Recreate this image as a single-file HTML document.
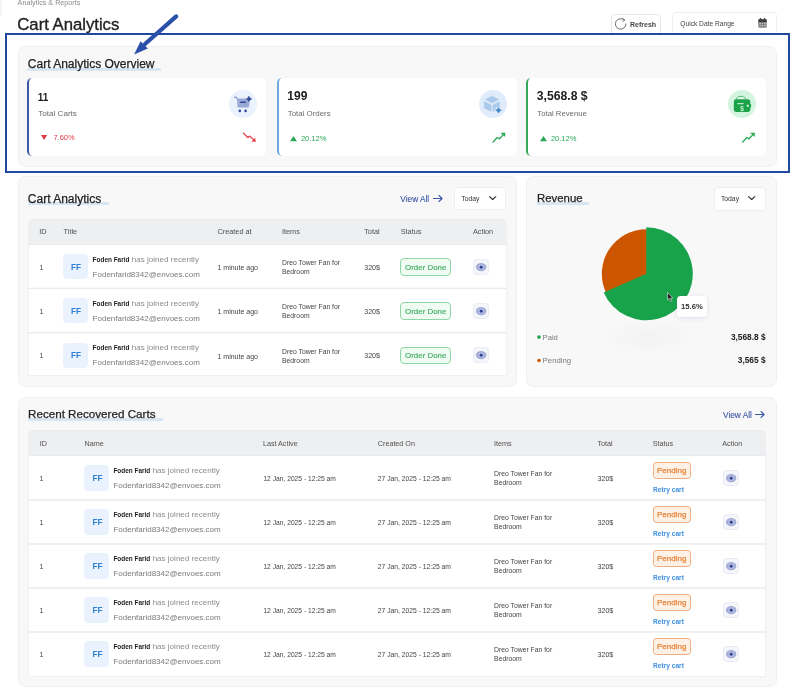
<!DOCTYPE html>
<html><head><meta charset="utf-8"><title>Cart Analytics</title>
<style>
html,body{margin:0;padding:0}
body{width:793px;height:697px;position:relative;overflow:hidden;background:#fff;font-family:"Liberation Sans",sans-serif;}
.t{position:absolute;white-space:nowrap;height:20px;line-height:20px;}
#w{position:absolute;left:0;top:0;width:793px;height:697px;will-change:transform;}
.b{position:absolute;box-sizing:border-box;}
svg{position:absolute;overflow:visible}
</style></head>
<body><div id="w">
<div class="b" style="left:-6px;top:-8px;width:7.7px;height:24.5px;background:#f5f5f5;border-radius:3px;"></div>
<div class="t" style="left:17.6px;top:-7px;font-size:7.2px;color:#8a8a8a;">Analytics &amp; Reports</div>
<div class="t" style="left:17.3px;top:15px;font-size:16.7px;color:#222;-webkit-text-stroke:0.35px #222;">Cart Analytics</div>
<div class="b" style="left:610.9px;top:14.1px;width:49.7px;height:20.9px;background:#fff;border:1px solid #e6e6e6;border-radius:3.5px;"></div>
<svg style="left:615px;top:17.8px" width="12" height="12" viewBox="0 0 12 12"><path d="M9.3 2 A5.3 5.3 0 1 0 11 5.9" fill="none" stroke="#666" stroke-width="0.95" stroke-linecap="round"/><path d="M7.6 0.6 L9.9 2.1 L7.7 3.4" fill="none" stroke="#666" stroke-width="0.85" stroke-linejoin="round" stroke-linecap="round"/></svg>
<div class="t" style="left:630px;top:15px;font-size:7px;color:#444;font-weight:bold;">Refresh</div>
<div class="b" style="left:672.3px;top:12.3px;width:104.3px;height:22.7px;background:#fff;border:1px solid #efefef;border-radius:4px;"></div>
<div class="t" style="left:680.3px;top:14px;font-size:6.65px;color:#444;">Quick Date Range</div>
<svg style="left:757.6px;top:18.2px" width="9" height="10" viewBox="0 0 9 10"><rect x="0.3" y="1.3" width="8.4" height="8.4" rx="1.2" fill="#7d7d7d"/><path d="M0.3 4 V2.5 Q0.3 1.3 1.5 1.3 H7.5 Q8.7 1.3 8.7 2.5 V4Z" fill="#3f3f3f"/><rect x="1.8" y="0" width="1.3" height="2.4" rx="0.5" fill="#3f3f3f"/><rect x="5.9" y="0" width="1.3" height="2.4" rx="0.5" fill="#3f3f3f"/><g fill="#c9c9c9"><rect x="1.5" y="5.1" width="1.4" height="1.1"/><rect x="3.8" y="5.1" width="1.4" height="1.1"/><rect x="6.1" y="5.1" width="1.4" height="1.1"/><rect x="1.5" y="7.1" width="1.4" height="1.1"/><rect x="3.8" y="7.1" width="1.4" height="1.1"/><rect x="6.1" y="7.1" width="1.4" height="1.1"/></g></svg>
<div class="b" style="left:17.6px;top:45.9px;width:759.3px;height:120.7px;background:#f8f8f8;border:1px solid #efeff0;border-radius:7.5px;"></div>
<div class="b" style="left:27px;top:68px;width:133.5px;height:2.8px;background:#d8e6f4;border-radius:2px;"></div>
<div class="t" style="left:27.8px;top:54px;font-size:12px;color:#222;-webkit-text-stroke:0.25px #222;">Cart Analytics Overview</div>
<div class="b" style="left:27.2px;top:77.8px;width:239.2px;height:78.7px;background:#fff;border-left:2px solid #3c57a3;border-radius:5px;"></div>
<div class="b" style="left:276.8px;top:77.8px;width:239.8px;height:78.7px;background:#fff;border-left:2px solid #6fa8dc;border-radius:5px;"></div>
<div class="b" style="left:526.3px;top:77.8px;width:239.7px;height:78.7px;background:#fff;border-left:2px solid #35a85a;border-radius:5px;"></div>
<div class="t" style="left:37.7px;top:88px;font-size:10px;color:#1d1d1d;font-weight:bold;">11</div>
<div class="t" style="left:287.3px;top:86px;font-size:12px;color:#1d1d1d;font-weight:bold;">199</div>
<div class="t" style="left:536.8px;top:86px;font-size:12.2px;color:#1d1d1d;font-weight:bold;">3,568.8 $</div>
<div class="t" style="left:38.2px;top:104px;font-size:8.1px;color:#6b6b6b;">Total Carts</div>
<div class="t" style="left:287.7px;top:104px;font-size:7.9px;color:#6b6b6b;">Total Orders</div>
<div class="t" style="left:537.3px;top:104px;font-size:7.75px;color:#6b6b6b;">Total Revenue</div>
<div class="t" style="left:53.4px;top:128px;font-size:7.5px;color:#e03a45;">7.60%</div>
<div class="t" style="left:300.9px;top:129px;font-size:7.5px;color:#2aa755;">20.12%</div>
<div class="t" style="left:550.9px;top:129px;font-size:7.5px;color:#2aa755;">20.12%</div>
<svg style="left:40.8px;top:135px" width="6.2" height="4.9" viewBox="0 0 6.2 4.9"><path d="M0 0H6.2L3.1 4.9Z" fill="#e03a45"/></svg>
<svg style="left:289.9px;top:135.6px" width="7" height="5.2" viewBox="0 0 7 5.2"><path d="M0 5.2H7L3.5 0Z" fill="#2aa755"/></svg>
<svg style="left:539.6px;top:135.6px" width="7" height="5.2" viewBox="0 0 7 5.2"><path d="M0 5.2H7L3.5 0Z" fill="#2aa755"/></svg>
<div class="b" style="left:228.9px;top:90.1px;width:28.4px;height:28.3px;background:#eaf2fd;border-radius:50%;"></div>
<div class="b" style="left:478.6px;top:90.1px;width:28.5px;height:28.3px;background:#e1ecfb;border-radius:50%;"></div>
<div class="b" style="left:727.9px;top:90.1px;width:28.4px;height:28.3px;background:#d3f4df;border-radius:50%;"></div>
<svg style="left:0;top:0" width="793" height="697" viewBox="0 0 793 697"><path d="M234.4 97.1 L236.5 97.3 L237.3 99.2" fill="none" stroke="#3e54a3" stroke-width="0.75" stroke-linecap="round" stroke-linejoin="round"/><path d="M237 98.5 H248.7 Q249.7 98.5 249.6 99.5 L249.1 106.3 Q249 107.6 247.8 107.6 H238.7 Q237.5 107.6 237.4 106.3Z" fill="#9aa8d6"/><rect x="240.1" y="101.6" width="5.9" height="1.3" rx="0.6" fill="#34489a"/><circle cx="239.8" cy="110.9" r="1.3" fill="#34489a"/><circle cx="245.6" cy="110.9" r="1.3" fill="#34489a"/><path d="M248.9 96.2 Q249.4 98.3 251.7 98.9 Q249.4 99.5 248.9 101.5 Q248.4 99.5 246.4 98.9 Q248.4 98.3 248.9 96.2Z" fill="#2f4596" stroke="#2f4596" stroke-width="0.6" stroke-linejoin="round"/><g fill="#a9c9eb" stroke="#a9c9eb" stroke-width="0.6" stroke-linejoin="round"><path d="M491.8 96.2 L498.7 99.5 L492 103 L485.4 99.5Z"/><path d="M484.3 101.5 L491.2 105.1 V111.3 L484.3 108Z"/><path d="M493 105.1 L499.4 101.8 V108 L493 111.3Z"/></g><circle cx="498.5" cy="110.3" r="3.4" fill="#e1ecfb"/><path d="M498.5 107.6 Q499 109.7 501.4 110.3 Q499 110.9 498.5 113 Q498 110.9 495.7 110.3 Q498 109.7 498.5 107.6Z" fill="#3f87c9" stroke="#3f87c9" stroke-width="0.6" stroke-linejoin="round"/><path d="M735.3 99.6 Q738.5 95.2 742.6 96.3 Q745 97 746.2 99.6" fill="#dff6e7" stroke="#1ba34a" stroke-width="0.7"/><rect x="733.8" y="99.3" width="16.5" height="12.6" rx="2.6" fill="#1ba34a"/><rect x="749.6" y="104" width="1.5" height="3.6" rx="0.7" fill="#1ba34a"/><rect x="737.2" y="102.9" width="6.6" height="1.3" rx="0.6" fill="#bfe8cc"/><rect x="746.7" y="104.8" width="2.3" height="2" rx="0.6" fill="#cdeed8"/><text x="742.1" y="110.8" font-size="6.4" font-weight="bold" fill="#c9efd5" text-anchor="middle" font-family="Liberation Sans, sans-serif">$</text><path d="M243.4 133.1 L247.8 137.5 L249.8 136.1 L253.7 139.9" fill="none" stroke="#e03a45" stroke-width="1.3" stroke-linejoin="round" stroke-linecap="round"/><path d="M255.6 141.5 L251.7 141.6 L255 138.3Z" fill="#e03a45" stroke="#e03a45" stroke-width="0.4" stroke-linejoin="round"/><g transform="translate(0 0)"><path d="M493 142.1 L497.1 137.5 L499.5 138.8 L502.9 135.1" fill="none" stroke="#2aa755" stroke-width="1.35" stroke-linejoin="round" stroke-linecap="round"/><path d="M505.1 132.9 L500.8 133 L505 136.6Z" fill="#2aa755" stroke="#2aa755" stroke-width="0.4" stroke-linejoin="round"/></g><g transform="translate(249.6 0)"><path d="M493 142.1 L497.1 137.5 L499.5 138.8 L502.9 135.1" fill="none" stroke="#2aa755" stroke-width="1.35" stroke-linejoin="round" stroke-linecap="round"/><path d="M505.1 132.9 L500.8 133 L505 136.6Z" fill="#2aa755" stroke="#2aa755" stroke-width="0.4" stroke-linejoin="round"/></g></svg>
<div class="b" style="left:17.6px;top:175.8px;width:499.6px;height:210.9px;background:#f8f8f8;border:1px solid #efeff0;border-radius:7.5px;"></div>
<div class="b" style="left:27.5px;top:202.3px;width:81.1px;height:2.9px;background:#d8e6f4;border-radius:2px;"></div>
<div class="t" style="left:27.8px;top:189px;font-size:12px;color:#222;-webkit-text-stroke:0.25px #222;">Cart Analytics</div>
<div class="t" style="left:400.3px;top:189px;font-size:8.3px;color:#3a55a5;-webkit-text-stroke:0.1px #3a55a5;">View All</div>
<svg style="left:432.8px;top:195.2px" width="10" height="7" viewBox="0 0 10 7"><path d="M0.5 3.5 H9 M6 0.5 L9.1 3.5 L6 6.5" fill="none" stroke="#3a55a5" stroke-width="1.05" stroke-linecap="round" stroke-linejoin="round"/></svg>
<div class="b" style="left:453.9px;top:186.6px;width:52.6px;height:23.9px;background:#fff;border:1px solid #eeeeee;border-radius:4px;"></div>
<div class="t" style="left:461.29999999999995px;top:189px;font-size:6.8px;color:#333;">Today</div>
<svg style="left:488.79999999999995px;top:196.45000000000002px" width="7.4" height="4.2" viewBox="0 0 7.4 4.2"><path d="M0.6 0.6 L3.7 3.5 L6.8 0.6" fill="none" stroke="#333" stroke-width="1.15" stroke-linecap="round" stroke-linejoin="round"/></svg>
<div class="b" style="left:27.7px;top:218.6px;width:478.9px;height:26.2px;background:#eeeff1;border-radius:6px 6px 0 0;border-top:1px solid #e8eaee;border-bottom:1px solid #e8eaee;"></div>
<div class="t" style="left:39.3px;top:222px;font-size:7.3px;color:#4f4f4f;">ID</div>
<div class="t" style="left:63.6px;top:222px;font-size:7.3px;color:#4f4f4f;">Title</div>
<div class="t" style="left:217.5px;top:222px;font-size:7.3px;color:#4f4f4f;">Created at</div>
<div class="t" style="left:282px;top:222px;font-size:7.3px;color:#4f4f4f;">Items</div>
<div class="t" style="left:364.2px;top:222px;font-size:7.3px;color:#4f4f4f;">Total</div>
<div class="t" style="left:400.7px;top:222px;font-size:7.3px;color:#4f4f4f;">Status</div>
<div class="t" style="left:472.9px;top:222px;font-size:7.3px;color:#4f4f4f;">Action</div>
<div class="b" style="left:27.7px;top:244.8px;width:478.9px;height:131.6px;background:#fff;border-radius:0 0 2px 2px;border:1px solid #eff0f4;border-top:none;"></div>
<div class="t" style="left:39.6px;top:258px;font-size:7px;color:#444;">1</div>
<div class="b" style="left:63px;top:254.0px;width:25px;height:25.2px;background:#eaf2fd;border-radius:4px;"></div>
<div class="t" style="left:71.1px;top:258px;font-size:8.2px;color:#2f80d2;font-weight:bold;">FF</div>
<div class="t" style="left:92.60000000000001px;top:250px;font-size:6.45px;color:#222;"><b style="color:#1c1c1c">Foden Farid</b> <span style="font-size:8.05px;color:#8b8b8b;margin-left:0.6px">has joined recently</span></div>
<div class="t" style="left:92.60000000000001px;top:265px;font-size:8.0px;color:#7a7a7a;">Fodenfarid8342@envoes.com</div>
<div class="t" style="left:217.5px;top:258px;font-size:7px;color:#444;">1 minute ago</div>
<div class="t" style="left:282px;top:253px;font-size:6.8px;color:#444;">Dreo Tower Fan for</div>
<div class="t" style="left:282px;top:262px;font-size:6.8px;color:#444;">Bedroom</div>
<div class="t" style="left:364.2px;top:258px;font-size:7.1px;color:#444;">320$</div>
<div class="b" style="left:400.4px;top:258.1px;width:50.6px;height:17.5px;background:#f0fbf3;border:1px solid #8dd7a4;border-radius:4px;"></div>
<div class="t" style="left:405.1px;top:258px;font-size:7.9px;color:#41ae64;-webkit-text-stroke:0.15px #41ae64;">Order Done</div>
<div class="b" style="left:472.5px;top:258.90000000000003px;width:16.6px;height:15.8px;background:#f5f6fa;border:1px solid #eaecf3;border-radius:3.5px;"></div>
<svg style="left:475.6px;top:262.6px" width="10.4" height="8.4" viewBox="0 0 10.4 8.4"><ellipse cx="5.2" cy="4.2" rx="5.2" ry="4.1" fill="#a3acd9"/><ellipse cx="5.2" cy="4.2" rx="3.2" ry="2.9" fill="#b4bbe1"/><circle cx="5.2" cy="4.2" r="1.45" fill="#2f3f93"/></svg>
<svg style="left:0;top:0" width="793" height="697" viewBox="0 0 793 697"><rect x="27.7" y="287.70" width="478.90" height="1.45" fill="#e9ebf1"/></svg>
<div class="t" style="left:39.6px;top:302px;font-size:7px;color:#444;">1</div>
<div class="b" style="left:63px;top:298.25px;width:25px;height:25.2px;background:#eaf2fd;border-radius:4px;"></div>
<div class="t" style="left:71.1px;top:302px;font-size:8.2px;color:#2f80d2;font-weight:bold;">FF</div>
<div class="t" style="left:92.60000000000001px;top:294px;font-size:6.45px;color:#222;"><b style="color:#1c1c1c">Foden Farid</b> <span style="font-size:8.05px;color:#8b8b8b;margin-left:0.6px">has joined recently</span></div>
<div class="t" style="left:92.60000000000001px;top:309px;font-size:8.0px;color:#7a7a7a;">Fodenfarid8342@envoes.com</div>
<div class="t" style="left:217.5px;top:302px;font-size:7px;color:#444;">1 minute ago</div>
<div class="t" style="left:282px;top:297px;font-size:6.8px;color:#444;">Dreo Tower Fan for</div>
<div class="t" style="left:282px;top:306px;font-size:6.8px;color:#444;">Bedroom</div>
<div class="t" style="left:364.2px;top:302px;font-size:7.1px;color:#444;">320$</div>
<div class="b" style="left:400.4px;top:302.35px;width:50.6px;height:17.5px;background:#f0fbf3;border:1px solid #8dd7a4;border-radius:4px;"></div>
<div class="t" style="left:405.1px;top:302px;font-size:7.9px;color:#41ae64;-webkit-text-stroke:0.15px #41ae64;">Order Done</div>
<div class="b" style="left:472.5px;top:303.15000000000003px;width:16.6px;height:15.8px;background:#f5f6fa;border:1px solid #eaecf3;border-radius:3.5px;"></div>
<svg style="left:475.6px;top:306.85px" width="10.4" height="8.4" viewBox="0 0 10.4 8.4"><ellipse cx="5.2" cy="4.2" rx="5.2" ry="4.1" fill="#a3acd9"/><ellipse cx="5.2" cy="4.2" rx="3.2" ry="2.9" fill="#b4bbe1"/><circle cx="5.2" cy="4.2" r="1.45" fill="#2f3f93"/></svg>
<svg style="left:0;top:0" width="793" height="697" viewBox="0 0 793 697"><rect x="27.7" y="331.95" width="478.90" height="1.45" fill="#e9ebf1"/></svg>
<div class="t" style="left:39.6px;top:346px;font-size:7px;color:#444;">1</div>
<div class="b" style="left:63px;top:342.5px;width:25px;height:25.2px;background:#eaf2fd;border-radius:4px;"></div>
<div class="t" style="left:71.1px;top:346px;font-size:8.2px;color:#2f80d2;font-weight:bold;">FF</div>
<div class="t" style="left:92.60000000000001px;top:338px;font-size:6.45px;color:#222;"><b style="color:#1c1c1c">Foden Farid</b> <span style="font-size:8.05px;color:#8b8b8b;margin-left:0.6px">has joined recently</span></div>
<div class="t" style="left:92.60000000000001px;top:353px;font-size:8.0px;color:#7a7a7a;">Fodenfarid8342@envoes.com</div>
<div class="t" style="left:217.5px;top:347px;font-size:7px;color:#444;">1 minute ago</div>
<div class="t" style="left:282px;top:342px;font-size:6.8px;color:#444;">Dreo Tower Fan for</div>
<div class="t" style="left:282px;top:351px;font-size:6.8px;color:#444;">Bedroom</div>
<div class="t" style="left:364.2px;top:346px;font-size:7.1px;color:#444;">320$</div>
<div class="b" style="left:400.4px;top:346.6px;width:50.6px;height:17.5px;background:#f0fbf3;border:1px solid #8dd7a4;border-radius:4px;"></div>
<div class="t" style="left:405.1px;top:346px;font-size:7.9px;color:#41ae64;-webkit-text-stroke:0.15px #41ae64;">Order Done</div>
<div class="b" style="left:472.5px;top:347.40000000000003px;width:16.6px;height:15.8px;background:#f5f6fa;border:1px solid #eaecf3;border-radius:3.5px;"></div>
<svg style="left:475.6px;top:351.1px" width="10.4" height="8.4" viewBox="0 0 10.4 8.4"><ellipse cx="5.2" cy="4.2" rx="5.2" ry="4.1" fill="#a3acd9"/><ellipse cx="5.2" cy="4.2" rx="3.2" ry="2.9" fill="#b4bbe1"/><circle cx="5.2" cy="4.2" r="1.45" fill="#2f3f93"/></svg>
<div class="b" style="left:526.2px;top:175.8px;width:251.0px;height:210.9px;background:#f8f8f8;border:1px solid #efeff0;border-radius:7.5px;"></div>
<div class="b" style="left:536.6px;top:202px;width:52.7px;height:3.2px;background:#d8e6f4;border-radius:2px;"></div>
<div class="t" style="left:537px;top:188px;font-size:11.4px;color:#222;-webkit-text-stroke:0.25px #222;">Revenue</div>
<div class="b" style="left:713.5px;top:186.5px;width:52.7px;height:24.1px;background:#fff;border:1px solid #eeeeee;border-radius:4px;"></div>
<div class="t" style="left:720.9px;top:189px;font-size:6.8px;color:#333;">Today</div>
<svg style="left:748.4px;top:196.45000000000002px" width="7.4" height="4.2" viewBox="0 0 7.4 4.2"><path d="M0.6 0.6 L3.7 3.5 L6.8 0.6" fill="none" stroke="#333" stroke-width="1.15" stroke-linecap="round" stroke-linejoin="round"/></svg>
<div class="b" style="left:596px;top:318px;width:104px;height:38px;background:radial-gradient(ellipse at center, rgba(0,0,0,0.022) 0%, rgba(0,0,0,0) 70%);"></div>
<svg style="left:0;top:0" width="793" height="697" viewBox="0 0 793 697"><path d="M646.8 274.3 L605.85 292.29 A44.5 44.5 0 0 1 646.8 229.3Z" fill="#cc5500"/><path d="M646.3 273.8 L646.3 227.3 A46.5 46.5 0 1 1 603.72 292.49Z" fill="#18a34b"/></svg>
<div class="b" style="left:676.9px;top:296.3px;width:30.3px;height:20.9px;background:#fff;border-radius:3.5px;box-shadow:0 1px 4px rgba(60,90,160,0.16);"></div>
<div class="t" style="left:681px;top:297px;font-size:7.7px;color:#333;font-weight:bold;">15.6%</div>
<svg style="left:667.2px;top:292px" width="7" height="10" viewBox="0 0 7 10"><path d="M0.5 0.5 V8 L2.3 6.4 L3.6 9.4 L4.8 8.9 L3.5 6 L5.9 5.9Z" fill="#222" stroke="#fff" stroke-width="0.5"/></svg>
<svg style="left:0;top:0" width="793" height="697" viewBox="0 0 793 697"><circle cx="539" cy="337.1" r="1.8" fill="#18a34b"/><circle cx="539" cy="360.5" r="1.8" fill="#cc5500"/></svg>
<div class="t" style="left:542.6px;top:328px;font-size:7.6px;color:#7a7a7a;">Paid</div>
<div class="t" style="right:27.5px;top:327px;font-size:8.3px;color:#222;font-weight:bold;">3,568.8 $</div>
<div class="t" style="left:542.6px;top:351px;font-size:7.8px;color:#7a7a7a;">Pending</div>
<div class="t" style="right:27.5px;top:350px;font-size:8.3px;color:#222;font-weight:bold;">3,565 $</div>
<div class="b" style="left:17.6px;top:396.9px;width:759.5px;height:289.9px;background:#f8f8f8;border:1px solid #efeff0;border-radius:7.5px;"></div>
<div class="b" style="left:27.6px;top:417.7px;width:135.2px;height:3.1px;background:#d8e6f4;border-radius:2px;"></div>
<div class="t" style="left:28px;top:404px;font-size:11.65px;color:#222;-webkit-text-stroke:0.25px #222;">Recent Recovered Carts</div>
<div class="t" style="left:723px;top:405px;font-size:8.3px;color:#3a55a5;-webkit-text-stroke:0.1px #3a55a5;">View All</div>
<svg style="left:755.4px;top:411.4px" width="10" height="7" viewBox="0 0 10 7"><path d="M0.5 3.5 H9 M6 0.5 L9.1 3.5 L6 6.5" fill="none" stroke="#3a55a5" stroke-width="1.05" stroke-linecap="round" stroke-linejoin="round"/></svg>
<div class="b" style="left:27.8px;top:429.8px;width:738.7px;height:26.3px;background:#eeeff1;border-radius:6px 6px 0 0;border-top:1px solid #e8eaee;border-bottom:1px solid #e8eaee;"></div>
<div class="t" style="left:39.8px;top:434px;font-size:7.2px;color:#4f4f4f;">ID</div>
<div class="t" style="left:84.6px;top:434px;font-size:7.2px;color:#4f4f4f;">Name</div>
<div class="t" style="left:262.9px;top:434px;font-size:7.2px;color:#4f4f4f;">Last Active</div>
<div class="t" style="left:377.8px;top:434px;font-size:7.2px;color:#4f4f4f;">Created On</div>
<div class="t" style="left:494.1px;top:434px;font-size:7.2px;color:#4f4f4f;">Items</div>
<div class="t" style="left:597.5px;top:434px;font-size:7.2px;color:#4f4f4f;">Total</div>
<div class="t" style="left:652.8px;top:434px;font-size:7.2px;color:#4f4f4f;">Status</div>
<div class="t" style="left:722.3px;top:434px;font-size:7.2px;color:#4f4f4f;">Action</div>
<div class="b" style="left:27.8px;top:456.1px;width:738.7px;height:220.5px;background:#fff;border-radius:0 0 2px 2px;border:1px solid #eff0f4;border-top:none;"></div>
<div class="t" style="left:39.6px;top:469px;font-size:7px;color:#444;">1</div>
<div class="b" style="left:84.3px;top:465.40000000000003px;width:25.0px;height:25.2px;background:#eaf2fd;border-radius:4px;"></div>
<div class="t" style="left:92.39999999999999px;top:469px;font-size:8.2px;color:#2f80d2;font-weight:bold;">FF</div>
<div class="t" style="left:113.4px;top:461px;font-size:6.45px;color:#222;"><b style="color:#1c1c1c">Foden Farid</b> <span style="font-size:8.05px;color:#8b8b8b;margin-left:0.6px">has joined recently</span></div>
<div class="t" style="left:113.4px;top:476px;font-size:8.0px;color:#7a7a7a;">Fodenfarid8342@envoes.com</div>
<div class="t" style="left:263.4px;top:469px;font-size:6.7px;color:#444;">12 Jan, 2025 - 12:25 am</div>
<div class="t" style="left:377.8px;top:469px;font-size:6.75px;color:#444;">27 Jan, 2025 - 12:25 am</div>
<div class="t" style="left:494.1px;top:464px;font-size:6.8px;color:#444;">Dreo Tower Fan for</div>
<div class="t" style="left:494.1px;top:473px;font-size:6.8px;color:#444;">Bedroom</div>
<div class="t" style="left:597.5px;top:469px;font-size:7.1px;color:#444;">320$</div>
<div class="b" style="left:652.9px;top:462.1px;width:38.3px;height:16.8px;background:#fef1e5;border:1px solid #f1ad7c;border-radius:3.5px;"></div>
<div class="t" style="left:657px;top:461px;font-size:8px;color:#e5873f;-webkit-text-stroke:0.25px #e5873f;">Pending</div>
<div class="t" style="left:653.1px;top:480px;font-size:6.6px;color:#3f8fdc;font-weight:bold;">Retry cart</div>
<div class="b" style="left:722.6px;top:470.0px;width:16.5px;height:15.9px;background:#f5f6fa;border:1px solid #eaecf3;border-radius:3.5px;"></div>
<svg style="left:725.65px;top:473.75000000000006px" width="10.4" height="8.4" viewBox="0 0 10.4 8.4"><ellipse cx="5.2" cy="4.2" rx="5.2" ry="4.1" fill="#a3acd9"/><ellipse cx="5.2" cy="4.2" rx="3.2" ry="2.9" fill="#b4bbe1"/><circle cx="5.2" cy="4.2" r="1.45" fill="#2f3f93"/></svg>
<svg style="left:0;top:0" width="793" height="697" viewBox="0 0 793 697"><rect x="27.8" y="499.25" width="738.70" height="1.50" fill="#e9ebf1"/></svg>
<div class="t" style="left:39.6px;top:513px;font-size:7px;color:#444;">1</div>
<div class="b" style="left:84.3px;top:509.40000000000003px;width:25.0px;height:25.2px;background:#eaf2fd;border-radius:4px;"></div>
<div class="t" style="left:92.39999999999999px;top:513px;font-size:8.2px;color:#2f80d2;font-weight:bold;">FF</div>
<div class="t" style="left:113.4px;top:505px;font-size:6.45px;color:#222;"><b style="color:#1c1c1c">Foden Farid</b> <span style="font-size:8.05px;color:#8b8b8b;margin-left:0.6px">has joined recently</span></div>
<div class="t" style="left:113.4px;top:520px;font-size:8.0px;color:#7a7a7a;">Fodenfarid8342@envoes.com</div>
<div class="t" style="left:263.4px;top:513px;font-size:6.7px;color:#444;">12 Jan, 2025 - 12:25 am</div>
<div class="t" style="left:377.8px;top:513px;font-size:6.75px;color:#444;">27 Jan, 2025 - 12:25 am</div>
<div class="t" style="left:494.1px;top:508px;font-size:6.8px;color:#444;">Dreo Tower Fan for</div>
<div class="t" style="left:494.1px;top:517px;font-size:6.8px;color:#444;">Bedroom</div>
<div class="t" style="left:597.5px;top:513px;font-size:7.1px;color:#444;">320$</div>
<div class="b" style="left:652.9px;top:506.1px;width:38.3px;height:16.8px;background:#fef1e5;border:1px solid #f1ad7c;border-radius:3.5px;"></div>
<div class="t" style="left:657px;top:505px;font-size:8px;color:#e5873f;-webkit-text-stroke:0.25px #e5873f;">Pending</div>
<div class="t" style="left:653.1px;top:524px;font-size:6.6px;color:#3f8fdc;font-weight:bold;">Retry cart</div>
<div class="b" style="left:722.6px;top:514.0px;width:16.5px;height:15.9px;background:#f5f6fa;border:1px solid #eaecf3;border-radius:3.5px;"></div>
<svg style="left:725.65px;top:517.75px" width="10.4" height="8.4" viewBox="0 0 10.4 8.4"><ellipse cx="5.2" cy="4.2" rx="5.2" ry="4.1" fill="#a3acd9"/><ellipse cx="5.2" cy="4.2" rx="3.2" ry="2.9" fill="#b4bbe1"/><circle cx="5.2" cy="4.2" r="1.45" fill="#2f3f93"/></svg>
<svg style="left:0;top:0" width="793" height="697" viewBox="0 0 793 697"><rect x="27.8" y="543.25" width="738.70" height="1.50" fill="#e9ebf1"/></svg>
<div class="t" style="left:39.6px;top:557px;font-size:7px;color:#444;">1</div>
<div class="b" style="left:84.3px;top:553.4px;width:25.0px;height:25.2px;background:#eaf2fd;border-radius:4px;"></div>
<div class="t" style="left:92.39999999999999px;top:557px;font-size:8.2px;color:#2f80d2;font-weight:bold;">FF</div>
<div class="t" style="left:113.4px;top:549px;font-size:6.45px;color:#222;"><b style="color:#1c1c1c">Foden Farid</b> <span style="font-size:8.05px;color:#8b8b8b;margin-left:0.6px">has joined recently</span></div>
<div class="t" style="left:113.4px;top:564px;font-size:8.0px;color:#7a7a7a;">Fodenfarid8342@envoes.com</div>
<div class="t" style="left:263.4px;top:557px;font-size:6.7px;color:#444;">12 Jan, 2025 - 12:25 am</div>
<div class="t" style="left:377.8px;top:557px;font-size:6.75px;color:#444;">27 Jan, 2025 - 12:25 am</div>
<div class="t" style="left:494.1px;top:552px;font-size:6.8px;color:#444;">Dreo Tower Fan for</div>
<div class="t" style="left:494.1px;top:561px;font-size:6.8px;color:#444;">Bedroom</div>
<div class="t" style="left:597.5px;top:557px;font-size:7.1px;color:#444;">320$</div>
<div class="b" style="left:652.9px;top:550.1px;width:38.3px;height:16.8px;background:#fef1e5;border:1px solid #f1ad7c;border-radius:3.5px;"></div>
<div class="t" style="left:657px;top:549px;font-size:8px;color:#e5873f;-webkit-text-stroke:0.25px #e5873f;">Pending</div>
<div class="t" style="left:653.1px;top:568px;font-size:6.6px;color:#3f8fdc;font-weight:bold;">Retry cart</div>
<div class="b" style="left:722.6px;top:558.0px;width:16.5px;height:15.9px;background:#f5f6fa;border:1px solid #eaecf3;border-radius:3.5px;"></div>
<svg style="left:725.65px;top:561.75px" width="10.4" height="8.4" viewBox="0 0 10.4 8.4"><ellipse cx="5.2" cy="4.2" rx="5.2" ry="4.1" fill="#a3acd9"/><ellipse cx="5.2" cy="4.2" rx="3.2" ry="2.9" fill="#b4bbe1"/><circle cx="5.2" cy="4.2" r="1.45" fill="#2f3f93"/></svg>
<svg style="left:0;top:0" width="793" height="697" viewBox="0 0 793 697"><rect x="27.8" y="587.25" width="738.70" height="1.50" fill="#e9ebf1"/></svg>
<div class="t" style="left:39.6px;top:601px;font-size:7px;color:#444;">1</div>
<div class="b" style="left:84.3px;top:597.4px;width:25.0px;height:25.2px;background:#eaf2fd;border-radius:4px;"></div>
<div class="t" style="left:92.39999999999999px;top:601px;font-size:8.2px;color:#2f80d2;font-weight:bold;">FF</div>
<div class="t" style="left:113.4px;top:593px;font-size:6.45px;color:#222;"><b style="color:#1c1c1c">Foden Farid</b> <span style="font-size:8.05px;color:#8b8b8b;margin-left:0.6px">has joined recently</span></div>
<div class="t" style="left:113.4px;top:608px;font-size:8.0px;color:#7a7a7a;">Fodenfarid8342@envoes.com</div>
<div class="t" style="left:263.4px;top:601px;font-size:6.7px;color:#444;">12 Jan, 2025 - 12:25 am</div>
<div class="t" style="left:377.8px;top:601px;font-size:6.75px;color:#444;">27 Jan, 2025 - 12:25 am</div>
<div class="t" style="left:494.1px;top:596px;font-size:6.8px;color:#444;">Dreo Tower Fan for</div>
<div class="t" style="left:494.1px;top:605px;font-size:6.8px;color:#444;">Bedroom</div>
<div class="t" style="left:597.5px;top:601px;font-size:7.1px;color:#444;">320$</div>
<div class="b" style="left:652.9px;top:594.1px;width:38.3px;height:16.8px;background:#fef1e5;border:1px solid #f1ad7c;border-radius:3.5px;"></div>
<div class="t" style="left:657px;top:593px;font-size:8px;color:#e5873f;-webkit-text-stroke:0.25px #e5873f;">Pending</div>
<div class="t" style="left:653.1px;top:612px;font-size:6.6px;color:#3f8fdc;font-weight:bold;">Retry cart</div>
<div class="b" style="left:722.6px;top:602.0px;width:16.5px;height:15.9px;background:#f5f6fa;border:1px solid #eaecf3;border-radius:3.5px;"></div>
<svg style="left:725.65px;top:605.75px" width="10.4" height="8.4" viewBox="0 0 10.4 8.4"><ellipse cx="5.2" cy="4.2" rx="5.2" ry="4.1" fill="#a3acd9"/><ellipse cx="5.2" cy="4.2" rx="3.2" ry="2.9" fill="#b4bbe1"/><circle cx="5.2" cy="4.2" r="1.45" fill="#2f3f93"/></svg>
<svg style="left:0;top:0" width="793" height="697" viewBox="0 0 793 697"><rect x="27.8" y="631.25" width="738.70" height="1.50" fill="#e9ebf1"/></svg>
<div class="t" style="left:39.6px;top:645px;font-size:7px;color:#444;">1</div>
<div class="b" style="left:84.3px;top:641.4px;width:25.0px;height:25.2px;background:#eaf2fd;border-radius:4px;"></div>
<div class="t" style="left:92.39999999999999px;top:645px;font-size:8.2px;color:#2f80d2;font-weight:bold;">FF</div>
<div class="t" style="left:113.4px;top:637px;font-size:6.45px;color:#222;"><b style="color:#1c1c1c">Foden Farid</b> <span style="font-size:8.05px;color:#8b8b8b;margin-left:0.6px">has joined recently</span></div>
<div class="t" style="left:113.4px;top:652px;font-size:8.0px;color:#7a7a7a;">Fodenfarid8342@envoes.com</div>
<div class="t" style="left:263.4px;top:645px;font-size:6.7px;color:#444;">12 Jan, 2025 - 12:25 am</div>
<div class="t" style="left:377.8px;top:645px;font-size:6.75px;color:#444;">27 Jan, 2025 - 12:25 am</div>
<div class="t" style="left:494.1px;top:640px;font-size:6.8px;color:#444;">Dreo Tower Fan for</div>
<div class="t" style="left:494.1px;top:649px;font-size:6.8px;color:#444;">Bedroom</div>
<div class="t" style="left:597.5px;top:645px;font-size:7.1px;color:#444;">320$</div>
<div class="b" style="left:652.9px;top:638.1px;width:38.3px;height:16.8px;background:#fef1e5;border:1px solid #f1ad7c;border-radius:3.5px;"></div>
<div class="t" style="left:657px;top:637px;font-size:8px;color:#e5873f;-webkit-text-stroke:0.25px #e5873f;">Pending</div>
<div class="t" style="left:653.1px;top:656px;font-size:6.6px;color:#3f8fdc;font-weight:bold;">Retry cart</div>
<div class="b" style="left:722.6px;top:646.0px;width:16.5px;height:15.9px;background:#f5f6fa;border:1px solid #eaecf3;border-radius:3.5px;"></div>
<svg style="left:725.65px;top:649.75px" width="10.4" height="8.4" viewBox="0 0 10.4 8.4"><ellipse cx="5.2" cy="4.2" rx="5.2" ry="4.1" fill="#a3acd9"/><ellipse cx="5.2" cy="4.2" rx="3.2" ry="2.9" fill="#b4bbe1"/><circle cx="5.2" cy="4.2" r="1.45" fill="#2f3f93"/></svg>
<div class="b" style="left:5px;top:33px;width:785.3px;height:140.1px;border:2.2px solid #1f489e;"></div>
<svg style="left:0;top:0" width="793" height="697" viewBox="0 0 793 697"><path d="M176.2 16.4 L145 44" stroke="#2b50aa" stroke-width="4.2" stroke-linecap="round" fill="none"/><path d="M134.1 54.6 L140.6 41.2 L147.8 48.6Z" fill="#2b50aa"/></svg>
</div></body></html>
